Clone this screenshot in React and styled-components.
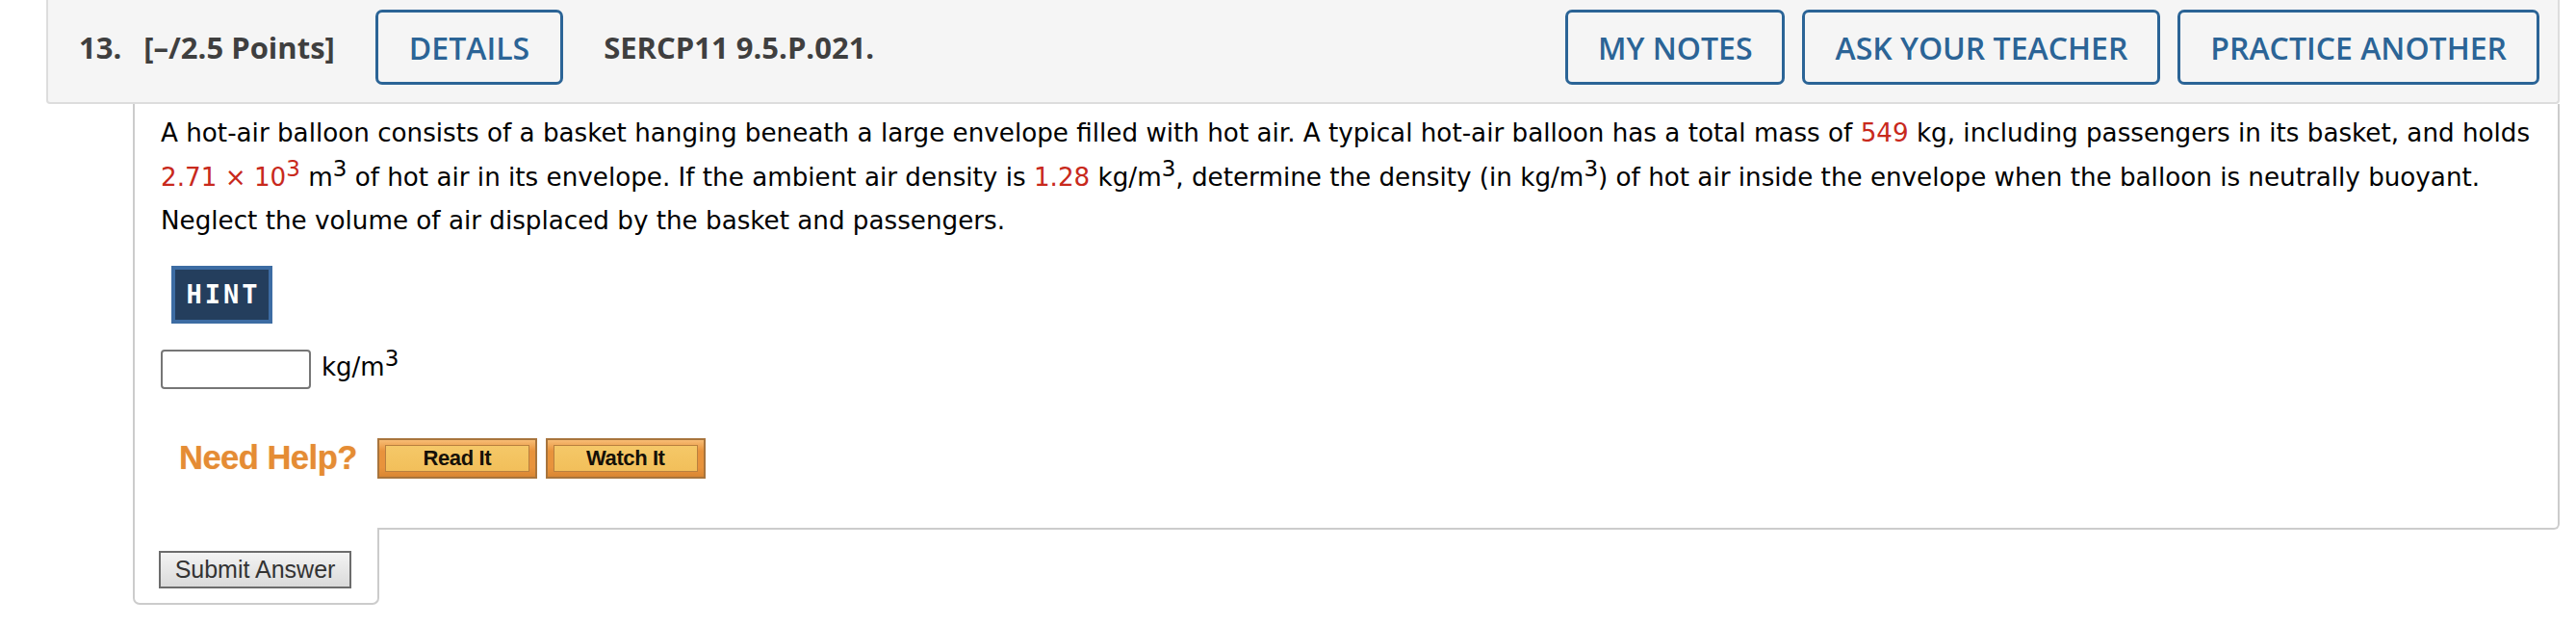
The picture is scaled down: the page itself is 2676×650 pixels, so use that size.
import React from "react";
import styled, { createGlobalStyle } from "styled-components";

const GlobalStyle = createGlobalStyle`
  html, body { margin: 0; padding: 0; background: #ffffff; }
  body { font-family: "DejaVu Sans", Verdana, sans-serif; }
`;

const Page = styled.div`
  padding: 0 17px 0 48px;
`;

const Header = styled.div`
  display: flex;
  align-items: center;
  background: #f5f5f5;
  border: 2px solid #dddddd;
  border-top: none;
  border-radius: 0 0 4px 4px;
  padding: 10px 19px 18px 32px;
  font-family: "Open Sans", "Liberation Sans", sans-serif;
`;

const HeadText = styled.span`
  font-size: 31px;
  font-weight: 700;
  color: #3f3f3f;
  line-height: 78px;
  margin-left: ${(p) => p.$ml || 0}px;
`;

const OutlineButton = styled.button`
  box-sizing: border-box;
  height: 78px;
  padding: 0 ${(p) => p.$px || 31}px;
  margin-left: ${(p) => p.$ml || 0}px;
  background: transparent;
  border: 3px solid #2b6496;
  border-radius: 7px;
  color: #2b6496;
  font-family: "Open Sans", "Liberation Sans", sans-serif;
  font-size: 32px;
  font-weight: 600;
  text-transform: uppercase;
  cursor: pointer;
`;

const Spacer = styled.div`
  flex: 1;
`;

const Actions = styled.div`
  display: flex;
  gap: 18px;
`;

const Body = styled.div`
  margin-left: 90px;
  border: 2px solid #cccccc;
  border-top: none;
  border-radius: 0 0 6px 0;
  padding: 8px 28px 51px 27px;
  color: #000;
`;

const Para = styled.p`
  margin: 0;
  font-family: Verdana, "DejaVu Sans", sans-serif;
  font-size: 26.2px;
  line-height: 45.5px;
`;

const Red = styled.span`
  color: #c8291c;
`;

const Sup = styled.sup`
  font-size: 23px;
  line-height: 0;
  vertical-align: 10px;
`;

const HintRow = styled.div`
  margin-top: 23px;
  display: flex;
`;

const HintButton = styled.button`
  box-sizing: border-box;
  width: 105px;
  height: 60px;
  margin-left: 11px;
  background: #243e5d;
  border: 4px solid #3d6ca3;
  color: #ffffff;
  font-family: "DejaVu Sans Mono", "Liberation Mono", monospace;
  font-weight: 700;
  font-size: 27px;
  letter-spacing: 3px;
  padding: 0 0 0 3px;
  cursor: pointer;
`;

const AnswerRow = styled.div`
  margin-top: 27px;
  display: flex;
  align-items: center;
  font-family: Verdana, "DejaVu Sans", sans-serif;
  font-size: 26px;
`;

const AnswerInput = styled.input`
  box-sizing: border-box;
  width: 156px;
  height: 41px;
  margin: 0;
  border: 2px solid #767676;
  border-radius: 4px;
  background: #fff;
`;

const Unit = styled.span`
  margin-left: 11px;
  position: relative;
  top: -2px;
`;

const HelpRow = styled.div`
  margin-top: 51px;
  display: flex;
  align-items: center;
`;

const NeedHelp = styled.span`
  margin-left: 19px;
  margin-right: 21px;
  font-family: "Liberation Sans", Arial, sans-serif;
  font-weight: 700;
  font-size: 34.5px;
  letter-spacing: -0.5px;
  color: #e58c34;
  text-shadow: 0 0 1px rgba(229, 140, 52, 0.6);
`;

const HelpButton = styled.button`
  box-sizing: border-box;
  width: 166px;
  height: 42px;
  margin-right: 9px;
  padding: 5px 6px;
  background: linear-gradient(#f7bc74, #e8933c 30%, #e8933c 75%, #d98632);
  border: 2px solid #a8743c;
  cursor: pointer;
`;

const HelpInner = styled.span`
  display: block;
  box-sizing: border-box;
  height: 28px;
  line-height: 26px;
  border: 1px solid #b9803f;
  background: linear-gradient(#f5c868, #f2bf5a);
  font-family: "Liberation Sans", Arial, sans-serif;
  font-weight: 700;
  font-size: 22px;
  letter-spacing: -0.4px;
  color: #151008;
  text-align: center;
`;

const SubmitTab = styled.div`
  box-sizing: border-box;
  width: 256px;
  margin-left: 90px;
  margin-top: -2px;
  position: relative;
  background: #ffffff;
  border: 2px solid #cccccc;
  border-top: none;
  border-radius: 0 0 7px 7px;
  padding: 24px 0 15px 25px;
`;

const SubmitButton = styled.button`
  box-sizing: border-box;
  width: 200px;
  height: 39px;
  padding: 0;
  border: 2px solid #6c6c6c;
  background: linear-gradient(#f3f3f3, #dadada);
  font-family: "Liberation Sans", Arial, sans-serif;
  font-size: 25px;
  color: #333333;
  cursor: pointer;
`;

export default function App() {
  return (
    <>
      <GlobalStyle />
      <Page>
        <Header>
          <HeadText>13.</HeadText>
          <HeadText $ml={23}>[–/2.5 Points]</HeadText>
          <OutlineButton $ml={42} $px={32}>Details</OutlineButton>
          <HeadText $ml={42}>SERCP11 9.5.P.021.</HeadText>
          <Spacer />
          <Actions>
            <OutlineButton>My Notes</OutlineButton>
            <OutlineButton>Ask Your Teacher</OutlineButton>
            <OutlineButton>Practice Another</OutlineButton>
          </Actions>
        </Header>
        <Body>
          <Para>
            A hot-air balloon consists of a basket hanging beneath a large envelope filled with hot air. A
            typical hot-air balloon has a total mass of <Red>549</Red> kg, including passengers in its basket,
            and holds <Red>2.71 × 10<Sup>3</Sup></Red> m<Sup>3</Sup> of hot air in its envelope. If the ambient
            air density is <Red>1.28</Red> kg/m<Sup>3</Sup>, determine the density (in kg/m<Sup>3</Sup>) of hot
            air inside the envelope when the balloon is neutrally buoyant. Neglect the volume of air displaced
            by the basket and passengers.
          </Para>
          <HintRow>
            <HintButton>HINT</HintButton>
          </HintRow>
          <AnswerRow>
            <AnswerInput type="text" aria-label="answer" />
            <Unit>
              kg/m<Sup>3</Sup>
            </Unit>
          </AnswerRow>
          <HelpRow>
            <NeedHelp>Need Help?</NeedHelp>
            <HelpButton>
              <HelpInner>Read It</HelpInner>
            </HelpButton>
            <HelpButton>
              <HelpInner>Watch It</HelpInner>
            </HelpButton>
          </HelpRow>
        </Body>
        <SubmitTab>
          <SubmitButton>Submit Answer</SubmitButton>
        </SubmitTab>
      </Page>
    </>
  );
}
